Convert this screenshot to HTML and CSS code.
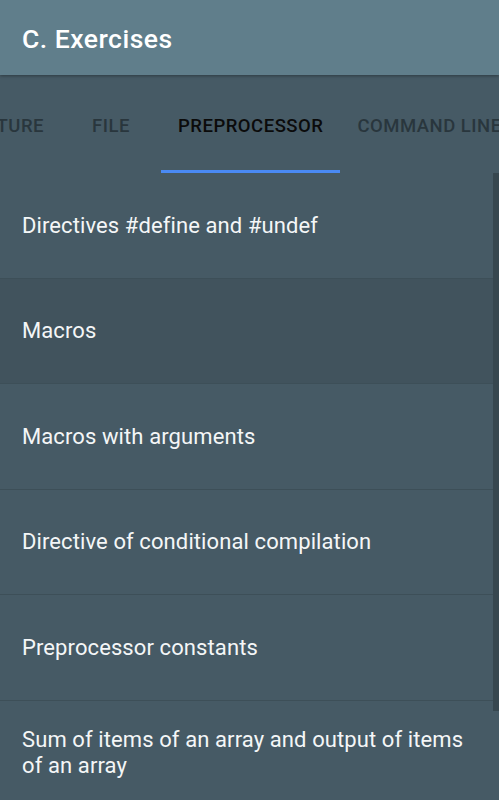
FILE: index.html
```html
<!DOCTYPE html>
<html lang="en">
<head>
<meta charset="utf-8">
<title>C. Exercises</title>
<link rel="stylesheet" href="styles.css">
</head>
<body>
<div class="app">
  <header class="toolbar">
    <h1 class="title">C. Exercises</h1>
  </header>
  <nav class="tabs">
    <div class="tab-strip">
      <div class="tab">STRUCTURE</div>
      <div class="tab">FILE</div>
      <div class="tab tab-active">PREPROCESSOR</div>
      <div class="tab">COMMAND LINE</div>
    </div>
  </nav>
  <main class="list-wrap">
    <ul class="list">
      <li class="item">Directives #define and #undef</li>
      <li class="item item-pressed">Macros</li>
      <li class="item">Macros with arguments</li>
      <li class="item">Directive of conditional compilation</li>
      <li class="item">Preprocessor constants</li>
      <li class="item">Sum of items of an array and output of items of an array</li>
    </ul>
    <div class="scrollbar"></div>
  </main>
</div>
</body>
</html>
```

FILE: styles.css
```css
* { box-sizing: border-box; }
html, body {
  margin: 0;
  padding: 0;
  background: #465a65;
}
body {
  font-family: Roboto, "Noto Sans", "Liberation Sans", sans-serif;
  width: 499px;
  height: 800px;
  overflow: hidden;
}
.app {
  display: flex;
  flex-direction: column;
  height: 800px;
}
.toolbar {
  height: 75px;
  background: #607e8b;
  display: flex;
  align-items: center;
  padding-left: 22px;
  position: relative;
  z-index: 2;
  box-shadow: 0 1px 3px rgba(0,0,0,0.35);
}
.title {
  margin: 0;
  color: #ffffff;
  font-size: 26.5px;
  font-weight: 500;
  letter-spacing: 0.5px;
  padding-top: 2px;
}
.tabs {
  height: 98px;
  background: #465a65;
  overflow: hidden;
  position: relative;
}
.tab-strip {
  display: flex;
  height: 100%;
  margin-left: -81px;
}
.tab {
  flex: none;
  min-width: 100px;
  padding: 4px 17px 0;
  display: flex;
  align-items: center;
  justify-content: center;
  height: 100%;
  font-size: 18.5px;
  font-weight: 500;
  letter-spacing: 0.5px;
  color: #29363d;
  position: relative;
}
.tab-active {
  color: #0b0b0b;
}
.tab-active::after {
  content: "";
  position: absolute;
  left: 0;
  right: 0;
  bottom: 0;
  height: 3px;
  background: #4a8af4;
}
.list-wrap {
  flex: 1;
  position: relative;
  overflow: hidden;
}
.list {
  list-style: none;
  margin: 0;
  padding: 0;
}
.item {
  min-height: 105.5px;
  display: flex;
  align-items: center;
  padding: 1px 28px 0 22px;
  border-bottom: 1px solid #3d4f58;
  color: #f4f6f7;
  font-size: 22px;
  letter-spacing: 0.1px;
  line-height: 26.5px;
  background: #465a65;
}
.item-pressed {
  background: #41535d;
}
.scrollbar {
  position: absolute;
  right: 0;
  top: 0;
  width: 6px;
  height: 538px;
  background: #37474f;
}
```
